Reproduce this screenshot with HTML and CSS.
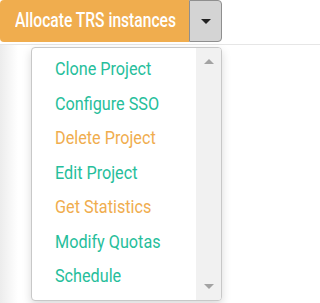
FILE: index.html
```html
<!DOCTYPE html>
<html>
<head>
<meta charset="utf-8">
<link rel="stylesheet" href="styles.css">
</head>
<body>
<div class="btn-group">
  <div class="btn-main"><span class="cond">Allocate TRS instances</span></div>
  <div class="btn-toggle"><span class="caret"></span></div>
</div>
<div class="page"></div>
<div class="dropdown">
  <ul class="menu">
    <li class="teal"><span class="cond">Clone Project</span></li>
    <li class="teal"><span class="cond">Configure SSO</span></li>
    <li class="orange"><span class="cond">Delete Project</span></li>
    <li class="teal"><span class="cond">Edit Project</span></li>
    <li class="orange"><span class="cond">Get Statistics</span></li>
    <li class="teal"><span class="cond">Modify Quotas</span></li>
    <li class="teal"><span class="cond">Schedule</span></li>
  </ul>
  <div class="scrollbar">
    <span class="arrow-up"></span>
    <span class="arrow-down"></span>
  </div>
</div>
</body>
</html>
```
FILE: styles.css
```css
html, body {
  margin: 0;
  padding: 0;
  background: #fff;
  font-family: Roboto, "Liberation Sans", sans-serif;
}
.cond {
  display: inline-block;
  transform-origin: left center;
}
.btn-group {
  display: flex;
  height: 42px;
  width: 222px;
}
.btn-main {
  width: 189px;
  box-sizing: border-box;
  background: #f0ad4e;
  color: #fff;
  border-radius: 4px 0 0 4px;
  font-size: 20px;
  font-weight: 500;
  line-height: 41px;
  padding-left: 15px;
  white-space: nowrap;
}
.btn-main .cond {
  transform: scaleX(0.78);
}
.btn-toggle {
  flex: 1;
  box-sizing: border-box;
  background: #d4d4d4;
  border: 1px solid #8f8f8f;
  border-radius: 0 4px 4px 0;
  display: flex;
  align-items: center;
  justify-content: center;
}
.caret {
  width: 0;
  height: 0;
  border-left: 5px solid transparent;
  border-right: 5px solid transparent;
  border-top: 5px solid #222;
}
.page {
  margin-top: 2px;
  border-top: 1px solid #e6e6e6;
  height: 258px;
  background: linear-gradient(to right, #ececec, #fff 18px);
}
.dropdown {
  position: absolute;
  left: 31px;
  top: 47px;
  width: 191px;
  height: 254px;
  box-sizing: border-box;
  border: 1px solid #c8c8c8;
  border-radius: 4px;
  background: #fff;
  box-shadow: 0 4px 10px rgba(0,0,0,0.15);
  display: flex;
  overflow: hidden;
}
.menu {
  flex: 1;
  margin: 0;
  padding: 4px 0 0 0;
  list-style: none;
}
.menu li {
  height: 34.5px;
  line-height: 34.5px;
  padding-left: 23px;
  font-size: 18px;
  white-space: nowrap;
}
.menu .cond {
  transform: scaleX(0.9);
}
.teal { color: #26be9b; }
.orange { color: #f0ad4e; }
.scrollbar {
  width: 25px;
  background: #f1f1f1;
  display: flex;
  flex-direction: column;
  justify-content: space-between;
  align-items: center;
  padding: 11px 0 11px 0;
}
.arrow-up {
  width: 0;
  height: 0;
  border-left: 5px solid transparent;
  border-right: 5px solid transparent;
  border-bottom: 5px solid #a3a3a3;
}
.arrow-down {
  width: 0;
  height: 0;
  border-left: 5px solid transparent;
  border-right: 5px solid transparent;
  border-top: 5px solid #a3a3a3;
}
```
